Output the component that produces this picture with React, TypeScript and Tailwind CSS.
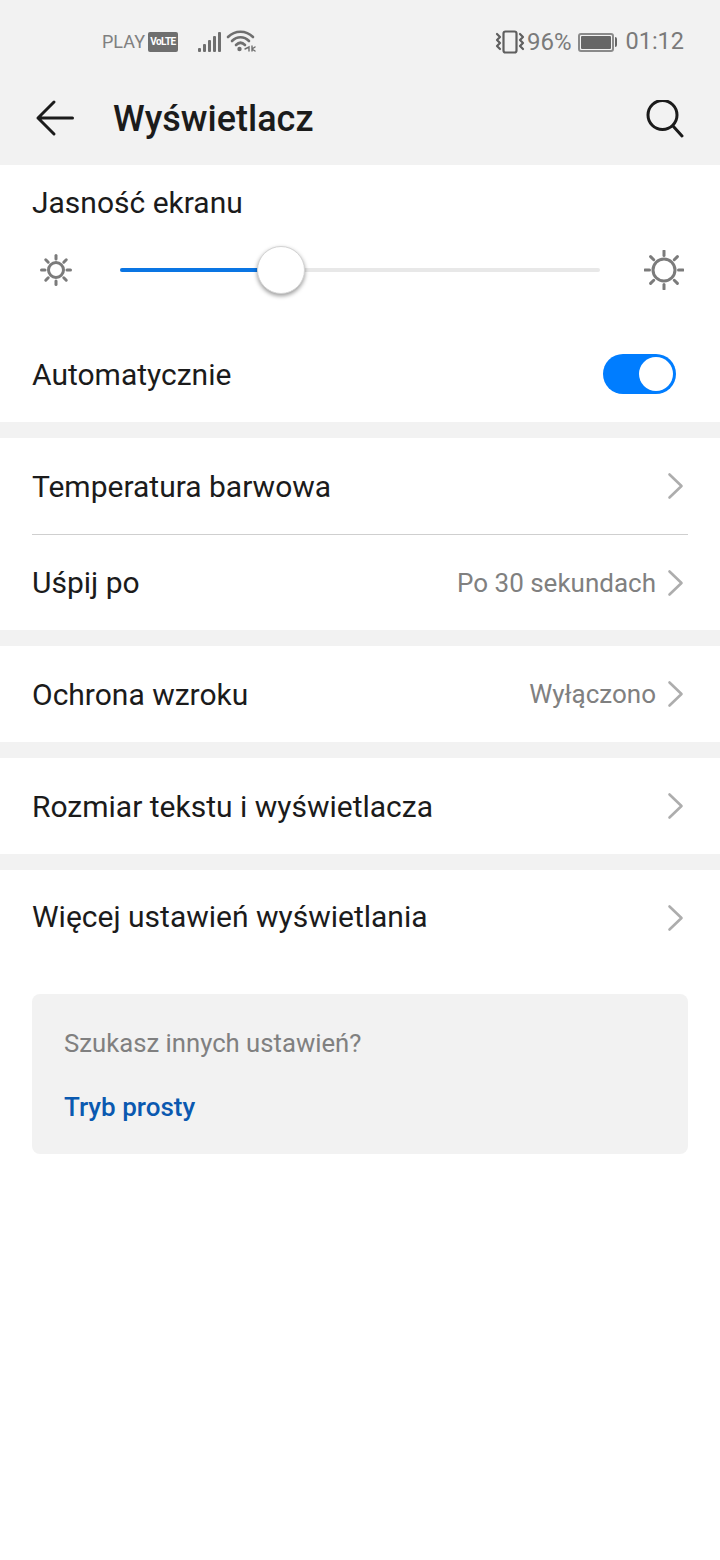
import React from "react";

const Chevron = () => (
  <svg width="20" height="28" viewBox="0 0 20 28" fill="none" stroke="#adadad" strokeWidth="2.6" strokeLinecap="round" strokeLinejoin="round" className="shrink-0">
    <path d="M3.5 2.5 L15.5 14 L3.5 25.5" />
  </svg>
);

const Sun = ({ size, r, inner, outer, sw }: { size: number; r: number; inner: number; outer: number; sw: number }) => {
  const c = size / 2;
  const rays = [0, 45, 90, 135, 180, 225, 270, 315].map((a) => {
    const t = (a * Math.PI) / 180;
    return {
      x1: c + inner * Math.cos(t),
      y1: c + inner * Math.sin(t),
      x2: c + outer * Math.cos(t),
      y2: c + outer * Math.sin(t),
    };
  });
  return (
    <svg width={size} height={size} viewBox={`0 0 ${size} ${size}`} fill="none" stroke="#7b7b7b" strokeWidth={sw} strokeLinecap="round">
      <circle cx={c} cy={c} r={r} />
      {rays.map((l, i) => (
        <line key={i} {...l} />
      ))}
    </svg>
  );
};

const Row = ({ label, value, h = "h-[96px]", tx = "mt-[2px]" }: { label: string; value?: string; h?: string; tx?: string }) => (
  <div className={`flex items-center justify-between ${h} pl-8 pr-[34px]`}>
    <span className={`text-[30px] leading-none text-[#1b1b1b] ${tx}`}>{label}</span>
    <div className="flex items-center gap-[10px]">
      {value && <span className="text-[26px] leading-none text-[#808080]">{value}</span>}
      <Chevron />
    </div>
  </div>
);

const Gap = () => <div className="h-4 bg-[#f2f2f2]" />;

export default function App() {
  return (
    <div className="w-[720px] h-[1560px] bg-white overflow-hidden" style={{ fontFamily: "Roboto, sans-serif" }}>
      <header className="h-[165px] bg-[#f2f2f2] flex flex-col">
        <div className="h-[72px] pt-[12px] flex items-center justify-between pl-[102px] pr-[36px] text-[#7a7a7a]">
          <div className="flex items-center">
            <span className="text-[18px] leading-none text-[#808080]">PLAY</span>
            <span className="ml-[3px] w-[30px] h-[20px] bg-[#6f6f6f] rounded-[2px] flex items-center justify-center text-white text-[10px] font-bold leading-none tracking-[-0.5px]">VoLTE</span>
            <svg width="24" height="22" viewBox="0 0 24 22" className="ml-[19px]" fill="#6f6f6f">
              <rect x="1" y="17" width="3" height="4" rx="1" />
              <rect x="6" y="13" width="3" height="8" rx="1" />
              <rect x="11" y="9" width="3" height="12" rx="1" />
              <rect x="16" y="5" width="3" height="16" rx="1" />
              <rect x="21" y="1" width="3" height="20" rx="1" />
            </svg>
            <svg width="30" height="24" viewBox="0 0 30 24" className="ml-[5px]" fill="none" stroke="#6f6f6f" strokeWidth="2.6" strokeLinecap="round">
              <path d="M2 7 C9 0 20 0 27 7" />
              <path d="M6 11 C11 6 18 6 23 11" />
              <path d="M10 15 C13 12 16 12 19 15" />
              <circle cx="13.5" cy="19" r="2.2" fill="#6f6f6f" stroke="none" />
              <path d="M19 19 L23 17 L23 21 M26 16 L26 21 M26 19 L29 17 M26 19 L29 21" strokeWidth="1.4" />
            </svg>
          </div>
          <div className="flex items-center">
            <svg width="30" height="24" viewBox="0 0 30 24" fill="none" stroke="#5f5f5f" strokeWidth="2.2" strokeLinecap="round" strokeLinejoin="round">
              <rect x="8.5" y="1.5" width="13" height="21" rx="2" />
              <path d="M2 4 L5 7 L2 10 L5 13 L2 16 L5 19" />
              <path d="M25 4 L28 7 L25 10 L28 13 L25 16 L28 19" />
            </svg>
            <span className="ml-[2px] text-[24px] leading-none text-[#7a7a7a]">96%</span>
            <div className="ml-[7px] flex items-center">
              <div className="w-[36px] h-[19px] rounded-[3px] border-2 border-[#8a8a8a] p-[1px]">
                <div className="w-full h-full bg-[#666] rounded-[1px]" />
              </div>
              <div className="ml-[1px] w-[2px] h-[10px] rounded-r-[2px] bg-[#666]" />
            </div>
            <span className="ml-[8px] text-[23.5px] leading-none text-[#7a7a7a]">01:12</span>
          </div>
        </div>
        <div className="flex-1 flex items-center justify-between pl-[36px] pr-[36px]">
          <div className="flex items-center">
            <svg width="38" height="36" viewBox="0 0 38 36" fill="none" stroke="#1b1b1b" strokeWidth="3" strokeLinecap="round" strokeLinejoin="round" className="overflow-visible">
              <path d="M36.5 17 L2 17 M18 1 L2 17 L18 33" />
            </svg>
            <span className="ml-[39px] text-[36px] leading-none font-medium text-[#1b1b1b]">Wyświetlacz</span>
          </div>
          <svg width="38" height="38" viewBox="0 0 38 38" fill="none" stroke="#1b1b1b" strokeWidth="3" strokeLinecap="round">
            <circle cx="16.5" cy="15" r="14.5" />
            <path d="M27 26 L36 36" />
          </svg>
        </div>
      </header>

      <section className="h-[257px] flex flex-col">
        <div className="pl-8 pt-[21px] text-[30px] leading-[34px] text-[#1b1b1b]">Jasność ekranu</div>
        <div className="mt-[26px] h-[48px] flex items-center pl-[40px]">
          <Sun size={32} r={7.5} inner={11} outer={14.5} sw={3} />
          <div className="relative ml-[48px] w-[480px] h-[4px] rounded-full bg-[#e8e8e8]">
            <div className="h-full w-[140px] rounded-full bg-[#0a75e3]" />
            <div className="absolute left-[137px] top-[-22px] w-[48px] h-[48px] rounded-full bg-white border border-[#d4d4d4] shadow-[0_2px_4px_rgba(0,0,0,0.4)]" />
          </div>
          <div className="ml-[44px]">
            <Sun size={40} r={11} inner={14.5} outer={19} sw={3} />
          </div>
        </div>
        <div className="mt-[60px] flex items-center justify-between pl-8 pr-[44px]">
          <span className="mt-[2px] text-[30px] leading-none text-[#1b1b1b]">Automatycznie</span>
          <div className="w-[73px] h-[40px] rounded-full bg-[#007dff] flex items-center justify-end pr-[3px]">
            <div className="w-[34px] h-[34px] rounded-full bg-white" />
          </div>
        </div>
      </section>
      <Gap />
      <Row label="Temperatura barwowa" />
      <div className="ml-8 mr-8 h-px bg-[#cfcfcf]" />
      <Row label="Uśpij po" value="Po 30 sekundach" h="h-[95px]" tx="" />
      <Gap />
      <Row label="Ochrona wzroku" value="Wyłączono" />
      <Gap />
      <Row label="Rozmiar tekstu i wyświetlacza" />
      <Gap />
      <Row label="Więcej ustawień wyświetlania" tx="-mt-[2px]" />
      <div className="mx-8 mt-[28px] h-[160px] rounded-[8px] bg-[#f2f2f2] px-8 pt-[33px]">
        <div className="text-[25.7px] leading-[32px] text-[#808080]">Szukasz innych ustawień?</div>
        <div className="mt-[32px] text-[26px] leading-[32px] font-medium text-[#0a59b0]">Tryb prosty</div>
      </div>
    </div>
  );
}
